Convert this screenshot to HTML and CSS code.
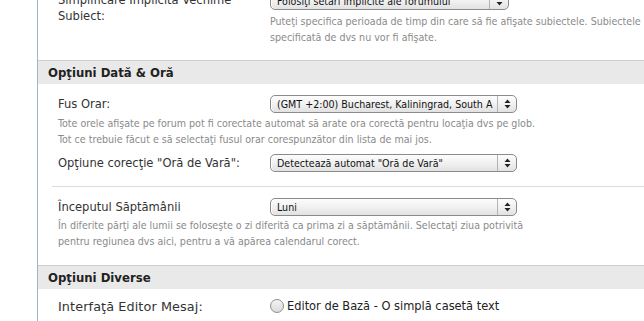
FILE: index.html
```html
<!DOCTYPE html>
<html lang="ro">
<head>
    <meta charset="UTF-8">
    <title>Opţiuni</title>
    <link rel="stylesheet" href="styles.css">
</head>
<body>
<div class="panel">
    <div class="row row-top">
        <div class="label">Simplificare Implicită Vechime Subiect:</div>
        <div class="control">
            <div class="select select-short">Folosiţi setări implicite ale forumului<span class="arrows"><svg width="7" height="10" viewBox="0 0 7 10"><path d="M3.5 0.5 L6.5 4 L0.5 4 Z M3.5 9.5 L6.5 6 L0.5 6 Z" fill="#222"/></svg></span></div>
            <div class="desc">Puteţi specifica perioada de timp din care să fie afişate subiectele. Subiectele mai vechi decât perioada<br>specificată de dvs nu vor fi afişate.</div>
        </div>
    </div>

    <div class="section-head">Opţiuni Dată &amp; Oră</div>

    <div class="row row-first">
        <div class="label">Fus Orar:</div>
        <div class="control">
            <div class="select">(GMT +2:00) Bucharest, Kaliningrad, South A<span class="arrows"><svg width="7" height="10" viewBox="0 0 7 10"><path d="M3.5 0.5 L6.5 4 L0.5 4 Z M3.5 9.5 L6.5 6 L0.5 6 Z" fill="#222"/></svg></span></div>
        </div>
    </div>
    <div class="desc desc-wide">Tote orele afişate pe forum pot fi corectate automat să arate ora corectă pentru locaţia dvs pe glob.<br>Tot ce trebuie făcut e să selectaţi fusul orar corespunzător din lista de mai jos.</div>
    <div class="row row-dst">
        <div class="label">Opţiune corecţie "Oră de Vară":</div>
        <div class="control">
            <div class="select">Detectează automat "Oră de Vară"<span class="arrows"><svg width="7" height="10" viewBox="0 0 7 10"><path d="M3.5 0.5 L6.5 4 L0.5 4 Z M3.5 9.5 L6.5 6 L0.5 6 Z" fill="#222"/></svg></span></div>
        </div>
    </div>

    <div class="divider"></div>

    <div class="row row-week">
        <div class="label">Începutul Săptămânii</div>
        <div class="control">
            <div class="select">Luni<span class="arrows"><svg width="7" height="10" viewBox="0 0 7 10"><path d="M3.5 0.5 L6.5 4 L0.5 4 Z M3.5 9.5 L6.5 6 L0.5 6 Z" fill="#222"/></svg></span></div>
        </div>
    </div>
    <div class="desc desc-wide desc-week">În diferite părţi ale lumii se foloseşte o zi diferită ca prima zi a săptămânii. Selectaţi ziua potrivită<br>pentru regiunea dvs aici, pentru a vă apărea calendarul corect.</div>

    <div class="section-head section-gap">Opţiuni Diverse</div>

    <div class="row row-editor">
        <div class="label label-wide">Interfaţă Editor Mesaj:</div>
        <div class="control">
            <label class="radio"><span class="radio-dot"></span>Editor de Bază - O simplă casetă text</label>
        </div>
    </div>
</div>
</body>
</html>
```

FILE: styles.css
```css
/* options panel */
body {
    margin: 0;
    background-color: #fff;
    font-family: "DejaVu Sans Condensed", "Liberation Sans", sans-serif;
    color: #333;
    overflow: hidden;
}
.panel {
    margin-left: 37px;
    margin-top: -8px;
    border-left: 1px solid #a3b3c2;
    min-height: 340px;
}
.row {
    display: grid;
    grid-template-columns: 212px 1fr;
    padding-left: 20px;
}
.label {
    font-size: 12.8px;
    line-height: 16px;
    color: #333;
    padding-top: 1px;
}
.label-wide {
    font-family: "DejaVu Sans", sans-serif;
    letter-spacing: 0.1px;
}
.row-top .label {
    width: 205px;
    padding-top: 0;
}
.row-top .desc {
    margin-top: 3px;
    white-space: nowrap;
}
.row-first {
    margin-top: 11px;
}
.row-dst {
    margin-top: 7px;
}
.row-week {
    margin-top: 11px;
}
.row-editor {
    margin-top: 9px;
}
.select {
    position: relative;
    width: 239px;
    height: 16px;
    line-height: 16px;
    padding-left: 6px;
    border: 1px solid #8b8b8b;
    border-radius: 5px;
    background: linear-gradient(#fdfdfd, #f1f1f1 50%, #e2e2e2);
    box-shadow: inset 1px 0 0 #fff;
    font-size: 10.6px;
    color: #111;
    white-space: nowrap;
    overflow: hidden;
}
.select-short {
    width: 231px;
}
.arrows {
    position: absolute;
    right: 0;
    top: 0;
    width: 18px;
    height: 16px;
    border-left: 1px solid #b4b4b4;
    display: flex;
    align-items: center;
    justify-content: center;
}
.desc {
    font-size: 10.6px;
    line-height: 16px;
    color: #8a8a8a;
}
.desc-wide {
    padding-left: 20px;
    margin-top: 2px;
}
.desc-week {
    margin-top: 1px;
}
.section-head {
    margin-top: 15px;
    height: 23px;
    line-height: 23px;
    border-top: 1px solid #cdcdcd;
    background-color: #e9e9e9;
    padding-left: 10px;
    font-size: 13px;
    font-weight: bold;
    color: #222;
}
.section-gap {
    margin-top: 16px;
}
.divider {
    margin: 14px 0 0 14px;
    border-top: 1px solid #d6dee5;
}
.radio {
    display: flex;
    align-items: center;
    font-size: 12.7px;
    line-height: 16px;
    color: #222;
}
.radio-dot {
    width: 12px;
    height: 12px;
    margin-right: 3px;
    border: 1px solid #8f8f8f;
    border-radius: 50%;
    background: linear-gradient(#f4f4f4, #dadada);
}
```
